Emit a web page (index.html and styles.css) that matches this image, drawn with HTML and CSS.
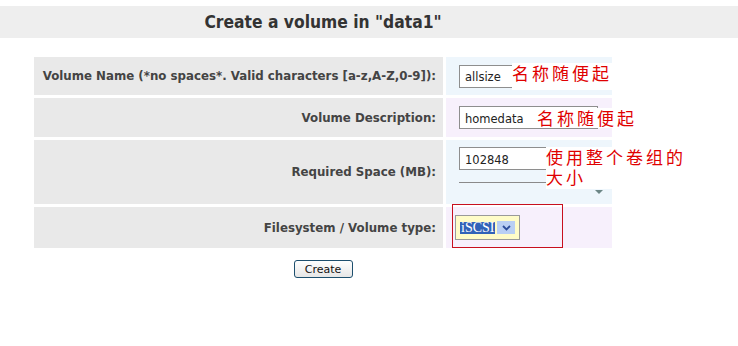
FILE: index.html
```html
<!DOCTYPE html>
<html lang="en">
<head>
  <meta charset="UTF-8">
  <title>Create a volume</title>
  <link rel="stylesheet" href="styles.css">
</head>
<body>
  <!-- Cabecera -->
  <div class="page-head">
    <div class="wrap">
      <h2 class="page-title">Create a volume in "data1"</h2>
    </div>
  </div>

  <div class="wrap">
    <form class="vol-form">
      <div class="vol-grid">
        <div class="lbl">Volume Name (*no spaces*. Valid characters [a-z,A-Z,0-9]):</div>
        <div class="fld fld-blue">
          <input class="txt" type="text" value="allsize">
          <span class="note note-1">名称随便起</span>
        </div>

        <div class="lbl">Volume Description:</div>
        <div class="fld fld-purple">
          <input class="txt" type="text" value="homedata">
          <span class="note note-2">名称随便起</span>
        </div>

        <div class="lbl">Required Space (MB):</div>
        <div class="fld fld-blue fld-tall">
          <input class="txt" type="text" value="102848">
          <div class="slider-line"></div>
          <span class="slider-arrow"></span>
          <div class="note note-3">
            <span class="note-line">使用整个卷组的</span>
            <span class="note-line">大小</span>
          </div>
        </div>

        <div class="lbl">Filesystem / Volume type:</div>
        <div class="fld fld-purple">
          <div class="fake-select">
            <span class="sel-text">iSCSI</span>
            <span class="sel-btn">
              <svg width="9" height="6" viewBox="0 0 9 6"><path d="M1 1 L4.5 4.5 L8 1" fill="none" stroke="#2b4c9a" stroke-width="1.8"/></svg>
            </span>
          </div>
          <div class="mark-box"></div>
        </div>
      </div>

      <div class="actions">
        <button type="button" class="btn">Create</button>
      </div>
    </form>
  </div>
</body>
</html>
```

FILE: styles.css
```css
body {
  margin: 0;
  padding: 6px 0 0 0;
  background: #fff;
  font-family: 'DejaVu Sans', Verdana, sans-serif;
  color: #444;
}

.wrap {
  width: 578px;
  margin-left: 34px;
}

/* Cabecera gris */
.page-head {
  background: #eeeeee;
  height: 32px;
}

.page-title {
  margin: 0;
  font-family: 'DejaVu Sans Condensed', 'DejaVu Sans', sans-serif;
  font-size: 17.3px;
  font-weight: bold;
  color: #333;
  text-align: center;
  line-height: 32px;
}

.vol-form {
  margin-top: 19px;
}

/* Tabla del formulario */
.vol-grid {
  display: grid;
  grid-template-columns: 409px 166px;
  grid-template-rows: 38px 39px 64px 41px;
  gap: 3px;
}

.lbl {
  background: #e9e9e9;
  font-size: 11.8px;
  font-weight: bold;
  color: #444;
  display: flex;
  align-items: center;
  justify-content: flex-end;
  padding-right: 7px;
}

.fld {
  position: relative;
  display: flex;
  align-items: center;
  padding-left: 13px;
}

.fld-blue {
  background: #eef6fc;
}

.fld-purple {
  background: #f7f0fc;
}

.fld-tall {
  flex-direction: column;
  align-items: flex-start;
  padding-top: 7px;
}

.txt {
  box-sizing: border-box;
  width: 139px;
  height: 23px;
  margin: 0;
  border: 1px solid #8e8e8e;
  background: #fff;
  font-family: 'DejaVu Sans', Verdana, sans-serif;
  font-size: 11.5px;
  color: #222;
  padding: 2px 5px 0;
}

.slider-line {
  width: 139px;
  height: 1px;
  background: #8a8a8a;
  margin-top: 12px;
}

.slider-arrow {
  position: absolute;
  left: 149px;
  top: 50px;
  width: 0;
  height: 0;
  border-left: 4px solid transparent;
  border-right: 4px solid transparent;
  border-top: 4px solid #6c8686;
}

/* Notas en rojo */
.note {
  position: absolute;
  background: #fff;
  color: #e00000;
  font-family: 'Noto Sans CJK SC', sans-serif;
  font-size: 17px;
  letter-spacing: 3px;
  line-height: 20px;
  white-space: nowrap;
}

.note-1 {
  left: 66px;
  top: 6px;
  width: 100px;
  height: 27px;
}

.note-2 {
  left: 91px;
  top: 10px;
}

.note-3 {
  left: 100px;
  top: 7px;
  padding-bottom: 2px;
  display: flex;
  flex-direction: column;
}

.note-line {
  display: block;
  line-height: 20px;
}

/* Select simulado */
.fake-select {
  display: flex;
  align-items: center;
  margin-left: -4px;
  border: 1px solid #9a9a9a;
  background: #fffcc8;
  padding: 3px 4px;
  height: 17px;
}

.sel-text {
  background: #3163b8;
  color: #fff;
  font-family: 'Liberation Serif', serif;
  font-size: 14px;
  line-height: 12px;
  padding: 0 1px;
}

.sel-btn {
  display: flex;
  align-items: center;
  justify-content: center;
  width: 18px;
  height: 13px;
  margin-left: 2px;
  background: #b9cff4;
}

.mark-box {
  position: absolute;
  left: 6px;
  top: -3px;
  width: 109px;
  height: 42px;
  border: 1px solid #c8101e;
}

.actions {
  display: flex;
  justify-content: center;
  margin-top: 12px;
}

.btn {
  width: 59px;
  height: 18px;
  padding: 0;
  border: 1px solid #1d4f6e;
  border-radius: 3px;
  background: linear-gradient(#ffffff, #e6e6e6);
  font-family: 'DejaVu Sans', Verdana, sans-serif;
  font-size: 11px;
  color: #111;
}
```
